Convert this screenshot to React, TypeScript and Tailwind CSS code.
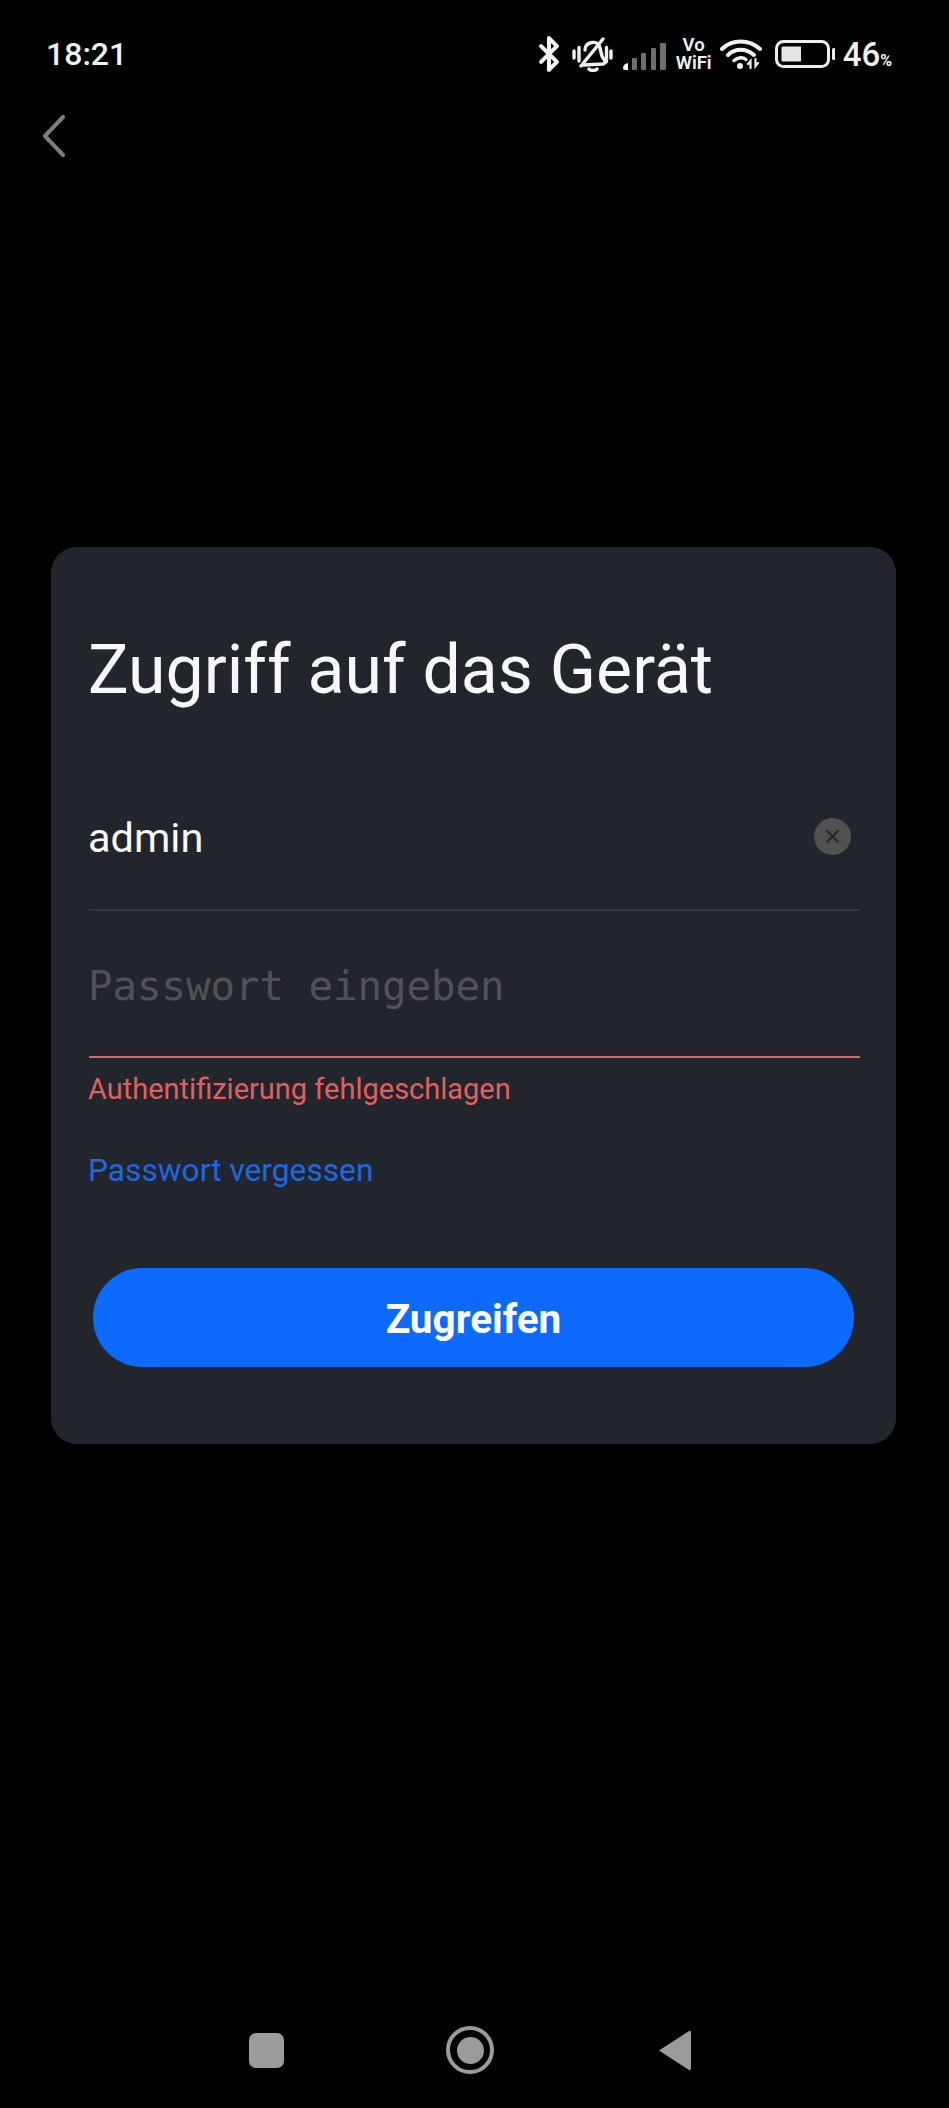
import { Bluetooth } from "lucide-react";

function BellMuted() {
  return (
    <svg width="41" height="35" viewBox="0 0 41 35" fill="none" stroke="#f0f0f0" strokeLinecap="round" strokeLinejoin="round">
      {/* bell */}
      <path d="M13 13 C13 8 17 6 20 5.500 C24 5 27 7 28 11 L30 19 C31 22 33 23 34 25 L31 27 L11 28" strokeWidth="3.400" />
      <path d="M17 32 C19 34 23 34 25 32" strokeWidth="3.400" />
      {/* slash */}
      <path d="M9 29 L31 2" strokeWidth="3.400" />
      {/* vibrate marks */}
      <path d="M2 14 V21 M7 10.500 V24 M34.500 10.500 V24 M39 14 V21" strokeWidth="3.400" />
    </svg>
  );
}

function SignalBars() {
  return (
    <svg width="43" height="27" viewBox="0 0 43 27">
      <path d="M0 25 Q0 21 5 20 V27 H2 Q0 27 0 25 Z" fill="#f2f2f2" />
      <rect x="9" y="15" width="5" height="12" rx="1" fill="#6e6e6e" />
      <rect x="18" y="10" width="5" height="17" rx="1" fill="#6e6e6e" />
      <rect x="28" y="5" width="5" height="22" rx="1" fill="#6e6e6e" />
      <rect x="37" y="0" width="6" height="27" rx="1" fill="#6e6e6e" />
    </svg>
  );
}

function WifiIcon() {
  return (
    <svg width="42" height="30" viewBox="0 0 42 30" fill="none" stroke="#f2f2f2" strokeLinecap="round">
      <path d="M2 10 C12 0 29 0 40 10" strokeWidth="4" />
      <path d="M8 16 C15 9 26 9 34 16" strokeWidth="4" />
      <path d="M14 21.500 C18 18 23 18 26 20.500" strokeWidth="3.500" />
      <circle cx="20" cy="27" r="3" fill="#f2f2f2" stroke="none" />
      {/* up and down arrows */}
      <path d="M28 25 L30.500 22 V29" strokeWidth="2.200" />
      <path d="M35.500 20 V27 L38 24" strokeWidth="2.200" />
    </svg>
  );
}

function BatteryIcon() {
  return (
    <svg width="60" height="28" viewBox="0 0 60 28">
      <rect x="1.500" y="1.500" width="52" height="25" rx="7" fill="none" stroke="#eeeeee" strokeWidth="3" />
      <path d="M8 6.500 H26 V21.500 H8 Q6.500 21.500 6.500 20 V8 Q6.500 6.500 8 6.500 Z" fill="#e6e6e6" />
      <rect x="57" y="8" width="3.500" height="12" rx="1.500" fill="#eeeeee" />
    </svg>
  );
}

function StatusBar() {
  return (
    <div className="flex items-center justify-between h-[108px] pl-[46px] pr-[57px] text-[#f2f2f2]">
      <span className="text-[32px] font-medium leading-none">18:21</span>
      <div className="flex items-center">
        <Bluetooth size={38} strokeWidth={2.6} color="#f2f2f2" className="-mx-[7px]" />
        <div className="ml-[11px]"><BellMuted /></div>
        <div className="ml-[10px] mt-[5px]"><SignalBars /></div>
        <div className="ml-[9px] flex flex-col items-center text-[18.500px] font-semibold w-[38px]">
          <span className="block leading-[18px]">Vo</span>
          <span className="block leading-[18px]">WiFi</span>
        </div>
        <div className="ml-[7px]"><WifiIcon /></div>
        <div className="ml-[13px]"><BatteryIcon /></div>
        <div className="ml-[8px] flex items-baseline font-medium leading-none">
          <span className="text-[33px]">46</span>
          <span className="text-[16px] font-bold">%</span>
        </div>
      </div>
    </div>
  );
}

function LoginCard() {
  return (
    <div className="ml-[51px] mr-[53px] h-[897px] rounded-[26px] bg-[#22252b] pl-[38px] pr-[36px]">
      <h1 className="-ml-px pt-[85px] text-[68px] leading-[76px] text-[#f7f8fa]">Zugriff auf das Gerät</h1>

      <div className="mt-[55px] flex h-[148px] items-center justify-between border-b-2 border-[#34373d]">
        <span className="-ml-px pt-[3px] text-[41.500px] leading-none text-[#f7f8fa]">admin</span>
        <div className="mr-[9px] flex h-[37px] w-[37px] items-center justify-center rounded-full bg-[#515151]">
          <svg width="15" height="15" viewBox="0 0 15 15" stroke="#26282c" strokeWidth="2.200" strokeLinecap="round">
            <path d="M2 2 L13 13 M13 2 L2 13" />
          </svg>
        </div>
      </div>

      <div className="flex h-[147px] items-center border-b-2 border-[#d9646e] pt-[5px]">
        <span className="-ml-px font-['DejaVu_Sans_Mono',monospace] text-[40.700px] leading-none text-[#505257]">Passwort eingeben</span>
      </div>

      <p className="-ml-px mt-[13px] text-[29px] leading-[36px] text-[#e0605f]">Authentifizierung fehlgeschlagen</p>
      <p className="-ml-px mt-[46px] text-[31.700px] leading-[36px] text-[#1e69e0]">Passwort vergessen</p>

      <button className="mt-[79px] ml-[4px] flex h-[99px] w-[761px] items-center justify-center rounded-full bg-[#0d6aff] pt-[3px] text-[40.500px] font-bold text-white">
        Zugreifen
      </button>
    </div>
  );
}

function NavBar() {
  return (
    <div className="flex items-center h-[48px] pl-[249px]">
      <div className="h-[35px] w-[35px] rounded-[7px] bg-[#9b9b9b]" />
      <div className="ml-[162px] flex h-[48px] w-[48px] items-center justify-center rounded-full border-[4px] border-[#9b9b9b]">
        <div className="h-[27px] w-[27px] rounded-full bg-[#9b9b9b]" />
      </div>
      <svg className="ml-[164px]" width="34" height="41" viewBox="0 0 34 41">
        <path d="M1 20.500 L31 1 Q33 0 33 3 V38 Q33 41 31 40 Z" fill="#9b9b9b" />
      </svg>
    </div>
  );
}

export default function App() {
  return (
    <div className="flex h-[2108px] w-[949px] flex-col bg-black font-['Roboto',sans-serif]">
      <StatusBar />
      <div className="h-[439px] pl-[42px] pt-[7px]">
        <svg width="24" height="42" viewBox="0 0 24 42" fill="none" stroke="#7d7d7d" strokeWidth="4" strokeLinecap="round" strokeLinejoin="round">
          <path d="M21 2 L3 21 L21 40" />
        </svg>
      </div>
      <LoginCard />
      <div className="flex-1" />
      <NavBar />
      <div className="h-[34px]" />
    </div>
  );
}
